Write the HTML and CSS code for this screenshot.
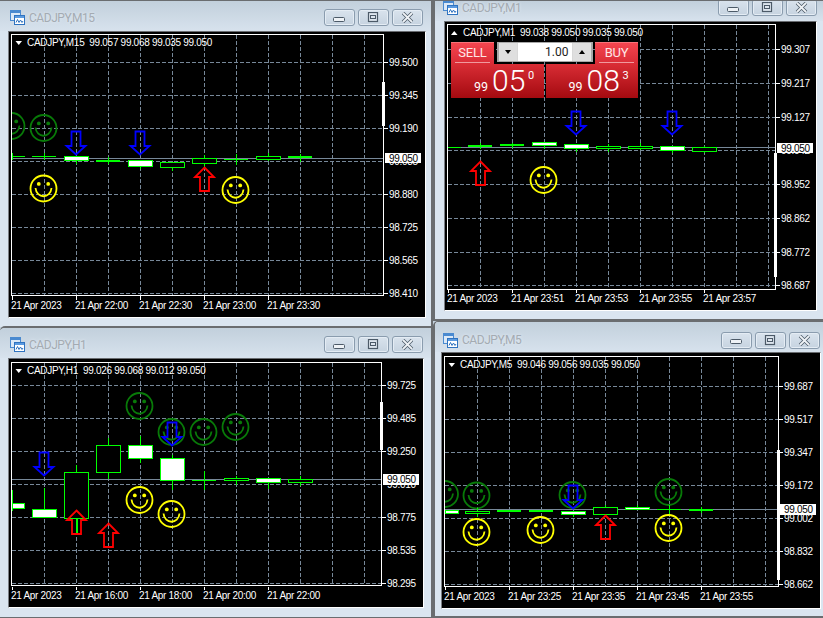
FILE: index.html
```
<!DOCTYPE html>
<html lang="en">
<head>
<meta charset="utf-8">
<title>CADJPY charts</title>
<link rel="stylesheet" href="styles.css">
</head>
<body>
<svg class="defs" width="0" height="0" aria-hidden="true">
  <defs>
    <g id="smile">
      <circle r="13" class="s-line"/>
      <circle cx="-4.7" cy="-4.6" r="1.9" class="s-eye"/>
      <circle cx="4.7" cy="-4.6" r="1.9" class="s-eye"/>
      <path d="M-8 -0.5C-7 10.5 7 10.5 8 -0.5" class="s-line"/>
    </g>
    <path id="adown" d="M-4.5 -24.5H4.5V-10H9.5L0 -1.5L-9.5 -10H-4.5Z"/>
    <path id="aup" d="M0 1.5L9.5 11H4.5V25H-4.5V11H-9.5Z"/>
    <symbol id="i-app" viewBox="0 0 15 15">
      <rect x=".5" y=".5" width="10" height="10" fill="#dce9f7" stroke="#4a8ad0"/>
      <rect x="1" y="1" width="9" height="2" fill="#4a8ad0"/>
      <rect x="4.5" y="5.5" width="10" height="9" fill="#fff" stroke="#2f73c0"/>
      <rect x="5" y="6" width="9" height="2" fill="#5a9ae0"/>
      <path d="M6 12.5L7.5 9.5L9 12.5L10.5 10L12 12.5L13 11" fill="none" stroke="#2f73c0"/>
    </symbol>
    <symbol id="i-min" viewBox="0 0 13 8">
      <rect x=".5" y="1.5" width="11" height="4" rx="1" fill="#eef2f6" stroke="#4c5a68"/>
    </symbol>
    <symbol id="i-max" viewBox="0 0 13 11">
      <rect x="1.5" y=".5" width="9" height="9" fill="#dde5ee" stroke="#4c5a68" stroke-width="1.2"/>
      <rect x="3.5" y="3.5" width="5" height="3" fill="#dde5ee" stroke="#4c5a68"/>
    </symbol>
    <symbol id="i-close" viewBox="0 0 13 11">
      <path d="M2 1L11 10M11 1L2 10" fill="none" stroke="#4c5a68" stroke-width="3.4"/>
      <path d="M2 1L11 10M11 1L2 10" fill="none" stroke="#eef2f6" stroke-width="1.8"/>
    </symbol>
    <clipPath id="clip1"><rect x="12" y="35" width="371" height="260"/></clipPath>
    <clipPath id="clip3"><rect x="12" y="363" width="369" height="223"/></clipPath>
    <clipPath id="clip4"><rect x="445" y="357" width="333" height="229"/></clipPath>
  </defs>
</svg>

<section class="window win-m15">
  <header class="titlebar">
    <svg class="app-icon"><use href="#i-app"/></svg>
    <span class="title">CADJPY,M15</span>
    <span class="buttons">
      <span class="cap"><svg class="g-min"><use href="#i-min"/></svg></span>
      <span class="cap"><svg class="g-max"><use href="#i-max"/></svg></span>
      <span class="cap"><svg class="g-close"><use href="#i-close"/></svg></span>
    </span>
  </header>
  <div class="chart">
    <svg class="plot" width="416" height="285" viewBox="9 32 416 285">
      <path class="grid" d="M12 62.500H383M12 95.500H383M12 128.500H383M12 161.500H383M12 194.500H383M12 227.500H383M12 260.500H383M12 293.500H383M44.500 35V295M76.500 35V295M108.500 35V295M140.500 35V295M172.500 35V295M204.500 35V295M236.500 35V295M268.500 35V295M300.500 35V295M332.500 35V295M364.500 35V295"/>
      <path class="bid" d="M12 158.500H383"/>
      <g clip-path="url(#clip1)">
        <use href="#smile" x="11.500" y="126" class="sm-green"/>
        <use href="#smile" x="43.500" y="128" class="sm-green"/>
        <use href="#smile" x="43.500" y="188.500" class="sm-yellow"/>
        <use href="#smile" x="235.500" y="190" class="sm-yellow"/>
      </g>
      <path class="wick" d="M12.500 153V160M12 156.500H25M44.500 153V160M32 156.500H56M76.500 160V164M108.500 157V164M140.500 167V169M172.500 167V171M204.500 155V167M236.500 154V165M224 159.500H248M268.500 153V161M300.500 154V162"/>
      <rect class="fill" x="96" y="160" width="24" height="2"/>
      <rect class="fill" x="288" y="156" width="24" height="2"/>
      <rect class="bull" x="160.500" y="162.500" width="24" height="5"/>
      <rect class="bull" x="192.500" y="158.500" width="24" height="5"/>
      <rect class="bull" x="256.500" y="156.500" width="24" height="3"/>
      <rect class="bear" x="64.500" y="156.500" width="24" height="4"/>
      <rect class="bear" x="128.500" y="160.500" width="24" height="6"/>
      <use href="#adown" x="76" y="156" class="arrow-blue"/>
      <use href="#adown" x="140" y="156" class="arrow-blue"/>
      <use href="#aup" x="204.500" y="166" class="arrow-red"/>
      <rect class="frame" x="11.500" y="34.500" width="372" height="261"/>
      <rect class="scroll" x="382" y="82" width="3" height="44"/>
      <path class="tick" d="M384 62.500H388M384 95.500H388M384 128.500H388M384 194.500H388M384 227.500H388M384 260.500H388M384 293.500H388M12.500 296V300M76.500 296V300M140.500 296V300M204.500 296V300M268.500 296V300"/>
      <polygon class="tri" points="15.500,41 22,41 18.750,45"/>
      <text class="hdr" x="27" y="46">CADJPY,M15&#160; 99.057 99.068 99.035 99.050</text>
      <text class="px" x="389" y="66">99.500</text>
      <text class="px" x="389" y="99">99.345</text>
      <text class="px" x="389" y="132">99.190</text>
      <text class="px" x="389" y="165">99.035</text>
      <text class="px" x="389" y="198">98.880</text>
      <text class="px" x="389" y="231">98.725</text>
      <text class="px" x="389" y="264">98.565</text>
      <text class="px" x="389" y="297">98.410</text>
      <rect class="pbox" x="385" y="153" width="36" height="10"/>
      <text class="px-now" x="389" y="162">99.050</text>
      <text class="tm" x="11" y="309">21 Apr 2023</text>
      <text class="tm" x="75" y="309">21 Apr 22:00</text>
      <text class="tm" x="139" y="309">21 Apr 22:30</text>
      <text class="tm" x="203" y="309">21 Apr 23:00</text>
      <text class="tm" x="267" y="309">21 Apr 23:30</text>
    </svg>
  </div>
</section>

<section class="window win-m1">
  <header class="titlebar">
    <svg class="app-icon"><use href="#i-app"/></svg>
    <span class="title">CADJPY,M1</span>
    <span class="buttons">
      <span class="cap"><svg class="g-min"><use href="#i-min"/></svg></span>
      <span class="cap"><svg class="g-max"><use href="#i-max"/></svg></span>
      <span class="cap"><svg class="g-close"><use href="#i-close"/></svg></span>
    </span>
  </header>
  <div class="chart">
    <svg class="plot" width="371" height="288" viewBox="445 22 371 288">
      <path class="grid" d="M448 49.500H775M448 83.500H775M448 117.500H775M448 150.500H775M448 184.500H775M448 218.500H775M448 252.500H775M448 285.500H775M480.500 25V289M512.500 25V289M544.500 25V289M576.500 25V289M608.500 25V289M640.500 25V289M672.500 25V289M704.500 25V289M736.500 25V289M768.500 25V289"/>
      <path class="bid" d="M448 147.500H775"/>
      <use href="#smile" x="543.500" y="180" class="sm-yellow"/>
      <path class="wick" d="M448 147.500H461M480.500 143V149M512.500 143V148M544.500 146V149M576.500 149V152M608.500 144V152M640.500 143V150M672.500 151V153M704.500 146V153"/>
      <rect class="fill" x="468" y="145" width="24" height="2"/>
      <rect class="fill" x="500" y="144" width="24" height="2"/>
      <rect class="bear" x="532.500" y="142.500" width="24" height="3"/>
      <rect class="bear" x="564.500" y="144.500" width="24" height="4"/>
      <rect class="bull" x="596.500" y="146.500" width="24" height="2"/>
      <rect class="bull" x="628.500" y="146.500" width="24" height="2"/>
      <rect class="bear" x="660.500" y="146.500" width="24" height="4"/>
      <rect class="bull" x="692.500" y="147.500" width="24" height="4"/>
      <use href="#adown" x="576" y="136" class="arrow-blue"/>
      <use href="#adown" x="672" y="136" class="arrow-blue"/>
      <use href="#aup" x="480.500" y="160" class="arrow-red"/>
      <rect class="frame" x="447.500" y="24.500" width="328" height="265"/>
      <rect class="scroll" x="774" y="153" width="3" height="124"/>
      <path class="tick" d="M776 49.500H780M776 83.500H780M776 117.500H780M776 184.500H780M776 218.500H780M776 252.500H780M776 285.500H780M448.500 290V293M512.500 290V293M576.500 290V293M640.500 290V293M704.500 290V293"/>
      <polygon class="tri" points="451,35 457.500,35 454.250,31"/>
      <text class="hdr" x="463" y="36">CADJPY,M1&#160; 99.038 99.050 99.035 99.050</text>
      <text class="px" x="781" y="53">99.307</text>
      <text class="px" x="781" y="87">99.217</text>
      <text class="px" x="781" y="121">99.127</text>
      <text class="px" x="781" y="154">99.042</text>
      <text class="px" x="781" y="188">98.952</text>
      <text class="px" x="781" y="222">98.862</text>
      <text class="px" x="781" y="256">98.772</text>
      <text class="px" x="781" y="289">98.687</text>
      <rect class="pbox" x="777" y="143" width="36" height="10"/>
      <text class="px-now" x="781" y="152">99.050</text>
      <text class="tm" x="447" y="302">21 Apr 2023</text>
      <text class="tm" x="511" y="302">21 Apr 23:51</text>
      <text class="tm" x="575" y="302">21 Apr 23:53</text>
      <text class="tm" x="639" y="302">21 Apr 23:55</text>
      <text class="tm" x="703" y="302">21 Apr 23:57</text>
    </svg>
    <div class="trade">
      <div class="trade-top">
        <div class="tab"><span class="tab-label">SELL</span></div>
        <div class="qty">
          <span class="spin"><i class="caret-down"></i></span>
          <span class="qty-val">1.00</span>
          <span class="spin"><i class="caret-up"></i></span>
        </div>
        <div class="tab"><span class="tab-label">BUY</span></div>
      </div>
      <div class="prices">
        <div class="price"><span class="p-small">99</span><span class="p-big">05</span><span class="p-sup">0</span></div>
        <div class="price"><span class="p-small">99</span><span class="p-big">08</span><span class="p-sup">3</span></div>
      </div>
    </div>
  </div>
</section>

<section class="window win-h1">
  <header class="titlebar">
    <svg class="app-icon"><use href="#i-app"/></svg>
    <span class="title">CADJPY,H1</span>
    <span class="buttons">
      <span class="cap"><svg class="g-min"><use href="#i-min"/></svg></span>
      <span class="cap"><svg class="g-max"><use href="#i-max"/></svg></span>
      <span class="cap"><svg class="g-close"><use href="#i-close"/></svg></span>
    </span>
  </header>
  <div class="chart">
    <svg class="plot" width="414" height="248" viewBox="9 359 414 248">
      <path class="grid" d="M12 385.500H381M12 418.500H381M12 451.500H381M12 484.500H381M12 517.500H381M12 550.500H381M12 583.500H381M44.500 363V586M76.500 363V586M108.500 363V586M140.500 363V586M172.500 363V586M204.500 363V586M236.500 363V586M268.500 363V586M300.500 363V586M332.500 363V586M364.500 363V586"/>
      <path class="bid" d="M12 479.500H381"/>
      <g clip-path="url(#clip3)">
        <use href="#smile" x="139.500" y="406" class="sm-green"/>
        <use href="#smile" x="171.500" y="432" class="sm-green"/>
        <use href="#smile" x="203.500" y="432" class="sm-green"/>
        <use href="#smile" x="235.500" y="427" class="sm-green"/>
        <use href="#smile" x="139.500" y="500" class="sm-yellow"/>
        <use href="#smile" x="171.500" y="514" class="sm-yellow"/>
      </g>
      <path class="wick" d="M12.500 490V511M44.500 488V510M76.500 465V473M76.500 519V533M77.500 519V533M108.500 438V446M108.500 472V479M140.500 436V446M140.500 458V463M172.500 455V459M172.500 480V490M204.500 471V490M192 480.500H216M236.500 476V485M268.500 482V489M300.500 476V486"/>
      <rect class="bear" x="12" y="503.500" width="12.500" height="5"/>
      <rect class="bear" x="32.500" y="509.500" width="24" height="8"/>
      <rect class="bull" x="64.500" y="472.500" width="24" height="46"/>
      <rect class="bull" x="96.500" y="445.500" width="24" height="27"/>
      <rect class="bear" x="128.500" y="445.500" width="24" height="13"/>
      <rect class="bear" x="160.500" y="458.500" width="24" height="22"/>
      <rect class="bull" x="224.500" y="478.500" width="24" height="2"/>
      <rect class="bear" x="256.500" y="478.500" width="24" height="4"/>
      <rect class="bull" x="288.500" y="479.500" width="24" height="3"/>
      <use href="#adown" x="44" y="477" class="arrow-blue"/>
      <use href="#adown" x="172" y="447" class="arrow-blue"/>
      <use href="#aup" x="76.500" y="509" class="arrow-red"/>
      <use href="#aup" x="108.500" y="522" class="arrow-red"/>
      <rect class="frame" x="11.500" y="362.500" width="370" height="223"/>
      <rect class="scroll" x="380" y="402" width="3" height="48"/>
      <path class="tick" d="M382 385.500H386M382 418.500H386M382 451.500H386M382 517.500H386M382 550.500H386M382 583.500H386M12.500 587V590M76.500 587V590M140.500 587V590M204.500 587V590M268.500 587V590"/>
      <polygon class="tri" points="15.500,369 22,369 18.750,373"/>
      <text class="hdr" x="27" y="374">CADJPY,H1&#160; 99.026 99.068 99.012 99.050</text>
      <text class="px" x="387" y="389">99.725</text>
      <text class="px" x="387" y="422">99.485</text>
      <text class="px" x="387" y="455">99.250</text>
      <text class="px" x="387" y="488">99.010</text>
      <text class="px" x="387" y="521">98.775</text>
      <text class="px" x="387" y="554">98.535</text>
      <text class="px" x="387" y="587">98.295</text>
      <rect class="pbox" x="383" y="474" width="36" height="11"/>
      <text class="px-now" x="387" y="483">99.050</text>
      <text class="tm" x="11" y="599">21 Apr 2023</text>
      <text class="tm" x="75" y="599">21 Apr 16:00</text>
      <text class="tm" x="139" y="599">21 Apr 18:00</text>
      <text class="tm" x="203" y="599">21 Apr 20:00</text>
      <text class="tm" x="267" y="599">21 Apr 22:00</text>
    </svg>
  </div>
</section>

<section class="window win-m5">
  <header class="titlebar">
    <svg class="app-icon"><use href="#i-app"/></svg>
    <span class="title">CADJPY,M5</span>
    <span class="buttons">
      <span class="cap"><svg class="g-min"><use href="#i-min"/></svg></span>
      <span class="cap"><svg class="g-max"><use href="#i-max"/></svg></span>
      <span class="cap"><svg class="g-close"><use href="#i-close"/></svg></span>
    </span>
  </header>
  <div class="chart">
    <svg class="plot" width="378" height="255" viewBox="442 353 378 255">
      <path class="grid" d="M445 386.500H778M445 419.500H778M445 452.500H778M445 485.500H778M445 518.500H778M445 551.500H778M445 584.500H778M477.500 357V586M509.500 357V586M541.500 357V586M573.500 357V586M605.500 357V586M637.500 357V586M669.500 357V586M701.500 357V586M733.500 357V586M765.500 357V586"/>
      <path class="bid" d="M445 509.500H778"/>
      <g clip-path="url(#clip4)">
        <use href="#smile" x="445" y="494" class="sm-green"/>
        <use href="#smile" x="476.500" y="495.500" class="sm-green"/>
        <use href="#smile" x="572.500" y="495" class="sm-green"/>
        <use href="#smile" x="668.500" y="492" class="sm-green"/>
        <use href="#smile" x="476.500" y="532" class="sm-yellow"/>
        <use href="#smile" x="540.500" y="530" class="sm-yellow"/>
        <use href="#smile" x="668.500" y="528" class="sm-yellow"/>
      </g>
      <path class="wick" d="M477.500 508V517M573.500 515V517M605.500 505V515M637.500 505V508M669.500 505V514M657 509.500H681M701.500 507V513"/>
      <rect class="bear" x="445" y="510.500" width="13.500" height="3"/>
      <rect class="bull" x="465.500" y="511.500" width="24" height="2"/>
      <rect class="fill" x="497" y="510" width="24" height="2"/>
      <rect class="fill" x="529" y="510" width="24" height="2"/>
      <rect class="bear" x="561.500" y="511.500" width="24" height="3"/>
      <rect class="bull" x="593.500" y="507.500" width="24" height="7"/>
      <rect class="bear" x="625.500" y="507.500" width="24" height="2"/>
      <rect class="fill" x="689" y="509" width="24" height="2"/>
      <use href="#adown" x="573" y="510" class="arrow-blue"/>
      <use href="#aup" x="605.500" y="514" class="arrow-red"/>
      <rect class="frame" x="444.500" y="356.500" width="334" height="230"/>
      <rect class="scroll" x="777" y="450" width="3" height="130"/>
      <path class="tick" d="M779 386.500H783M779 419.500H783M779 452.500H783M779 485.500H783M779 518.500H783M779 551.500H783M779 584.500H783M445.500 587V590M509.500 587V590M573.500 587V590M637.500 587V590M701.500 587V590"/>
      <polygon class="tri" points="448.500,363 455,363 451.750,367"/>
      <text class="hdr" x="460" y="368">CADJPY,M5&#160; 99.046 99.056 99.035 99.050</text>
      <text class="px" x="784" y="390">99.687</text>
      <text class="px" x="784" y="423">99.517</text>
      <text class="px" x="784" y="456">99.347</text>
      <text class="px" x="784" y="489">99.172</text>
      <text class="px" x="784" y="522">99.002</text>
      <text class="px" x="784" y="555">98.832</text>
      <text class="px" x="784" y="588">98.662</text>
      <rect class="pbox" x="779" y="504" width="37" height="11"/>
      <text class="px-now" x="784" y="513">99.050</text>
      <text class="tm" x="444" y="600">21 Apr 2023</text>
      <text class="tm" x="508" y="600">21 Apr 23:25</text>
      <text class="tm" x="572" y="600">21 Apr 23:35</text>
      <text class="tm" x="636" y="600">21 Apr 23:45</text>
      <text class="tm" x="700" y="600">21 Apr 23:55</text>
    </svg>
  </div>
</section>
</body>
</html>
```
FILE: styles.css
```
html, body {
  margin: 0;
  padding: 0;
  width: 823px;
  height: 618px;
  overflow: hidden;
  background: #c4d2de;
}
.defs { position: absolute; }

/* windows sit on a free desktop canvas */
.window {
  position: absolute;
  display: flex;
  flex-direction: column;
  box-sizing: border-box;
  background: #dae5f0;
  border-style: solid;
  border-color: #6a6d70;
  border-width: 0;
  overflow: hidden;
}
.win-m15 { left: 0; top: 0; width: 433px; height: 327px; border-top-width: 1px; border-right-width: 2px; }
.win-m1  { left: 433px; top: 0; width: 390px; height: 321px; border-top-width: 1px; border-left-width: 2px; border-bottom-width: 2px; }
.win-h1  { left: 0; top: 326px; width: 433px; height: 292px; border-top-width: 2px; border-right-width: 2px; border-bottom-width: 1px; border-top-left-radius: 5px; }
.win-m5  { left: 433px; top: 321px; width: 390px; height: 297px; border-top-width: 1px; border-left-width: 2px; border-bottom-width: 2px; border-top-left-radius: 5px; }

.titlebar {
  display: flex;
  align-items: center;
  flex: none;
  box-sizing: border-box;
  background: linear-gradient(#c2d0dc, #d7e2ed);
  padding-left: 10px;
}
.win-m15 .titlebar { height: 30px; padding-top: 3px; padding-right: 8px; }
.win-m1  .titlebar { height: 20px; padding: 0 6px 7px 8px; overflow: visible; }
.win-h1  .titlebar { height: 30px; padding-top: 3px; padding-right: 8px; }
.win-m5  .titlebar { height: 30px; padding: 6px 3px 0 8px; }

.app-icon { width: 15px; height: 15px; flex: none; }
.title {
  margin-left: 4px;
  font: 12px "Roboto", "Liberation Sans", sans-serif;
  letter-spacing: -0.45px;
  color: #a4abb2;
  text-shadow: 0 0 3px #e6eef6;
}
.buttons { margin-left: auto; display: flex; gap: 3px; }
.cap {
  box-sizing: border-box;
  width: 31px;
  height: 17px;
  display: flex;
  align-items: center;
  justify-content: center;
  border: 1px solid #8a9cae;
  border-radius: 3px;
  background: linear-gradient(#d9e3ed, #c6d3e0);
  box-shadow: inset 0 0 0 1px #e4ecf4;
}
.g-min { width: 13px; height: 8px; margin-top: 4px; }
.g-max { width: 13px; height: 11px; }
.g-close { width: 13px; height: 11px; }

.chart {
  position: relative;
  flex: none;
  margin-left: 8px;
  box-sizing: border-box;
  background: #000;
  border-style: solid;
  border-width: 1px;
  border-color: #696c70 #fff #fff #7c8086;
}
.win-m15 .chart { width: 418px; height: 287px; }
.win-m1  .chart { width: 373px; height: 290px; margin-left: 9px; }
.win-h1  .chart { width: 416px; height: 250px; }
.win-m5  .chart { width: 380px; height: 257px; margin-left: 6px; }

.plot { display: block; shape-rendering: crispEdges; }
.grid { fill: none; stroke: #778899; stroke-width: 1; stroke-dasharray: 4 2; }
.bid { fill: none; stroke: #778899; stroke-width: 1; }
.frame { fill: none; stroke: #fff; stroke-width: 1; }
.tick { fill: none; stroke: #fff; stroke-width: 1; }
.scroll { fill: #fff; }
.tri { fill: #fff; shape-rendering: auto; }
.wick { fill: none; stroke: #00ff00; stroke-width: 1; }
.fill { fill: #00ff00; }
.bull { fill: #000; stroke: #00ff00; stroke-width: 1; }
.bear { fill: #fff; stroke: #00ff00; stroke-width: 1; }
.pbox { fill: #fff; }

.s-line { fill: none; stroke: currentColor; stroke-width: 1.8; shape-rendering: auto; }
.s-eye { fill: currentColor; shape-rendering: auto; }
.sm-green { color: #087a08; }
.sm-yellow { color: #ffff00; }
.arrow-blue { fill: none; stroke: #0000ff; stroke-width: 1.8; shape-rendering: auto; }
.arrow-red { fill: none; stroke: #ff0000; stroke-width: 1.8; shape-rendering: auto; }

.hdr, .px, .px-now, .tm {
  font-family: "Liberation Sans", sans-serif;
  font-size: 10px;
  letter-spacing: -0.3px;
  fill: #fff;
  shape-rendering: auto;
}
.px-now { fill: #000; }

/* one-click trading panel lies over the chart */
.trade {
  position: absolute;
  left: 6px;
  top: 20px;
  width: 187px;
  height: 56px;
  display: flex;
  flex-direction: column;
  font-family: "Roboto", "Liberation Sans", sans-serif;
  color: #fff;
}
.trade-top { display: flex; justify-content: space-between; height: 22px; }
.tab {
  box-sizing: border-box;
  width: 43px;
  padding: 0 4px;
  background: linear-gradient(#f4454f, #d92c36);
  border-top: 1px solid #f8737a;
}
.tab-label {
  display: block;
  height: 20px;
  box-sizing: border-box;
  border-bottom: 1px solid #f09a9e;
  text-align: center;
  font-size: 13px;
  line-height: 20px;
  color: #ffe6e6;
  letter-spacing: -0.2px;
}
.qty {
  box-sizing: border-box;
  width: 96px;
  height: 20px;
  display: flex;
  background: #d8d8d8;
  border: 2px solid #a8a8a8;
  border-width: 1px 2px;
}
.spin {
  width: 18px;
  display: flex;
  align-items: center;
  justify-content: center;
  background: #dfdfdf;
}
.caret-down, .caret-up { width: 0; height: 0; border-left: 3.500px solid transparent; border-right: 3.500px solid transparent; }
.caret-down { border-top: 4px solid #000; }
.caret-up { border-bottom: 4px solid #000; }
.qty-val {
  flex: 1;
  margin: 0 1px;
  background: #fff;
  color: #222;
  font-size: 12px;
  line-height: 18px;
  text-align: right;
  padding-right: 3px;
}
.prices { display: flex; gap: 2px; height: 34px; }
.price {
  flex: 1;
  position: relative;
  display: flex;
  align-items: baseline;
  padding-left: 23px;
  background: linear-gradient(#d92d35, #a40a10);
  line-height: 34px;
}
.p-small { font-size: 12.500px; width: 18px; }
.p-big { font-size: 30px; font-weight: 300; width: 36px; }
.p-sup { font-size: 11px; align-self: flex-start; line-height: 24px; }
```
